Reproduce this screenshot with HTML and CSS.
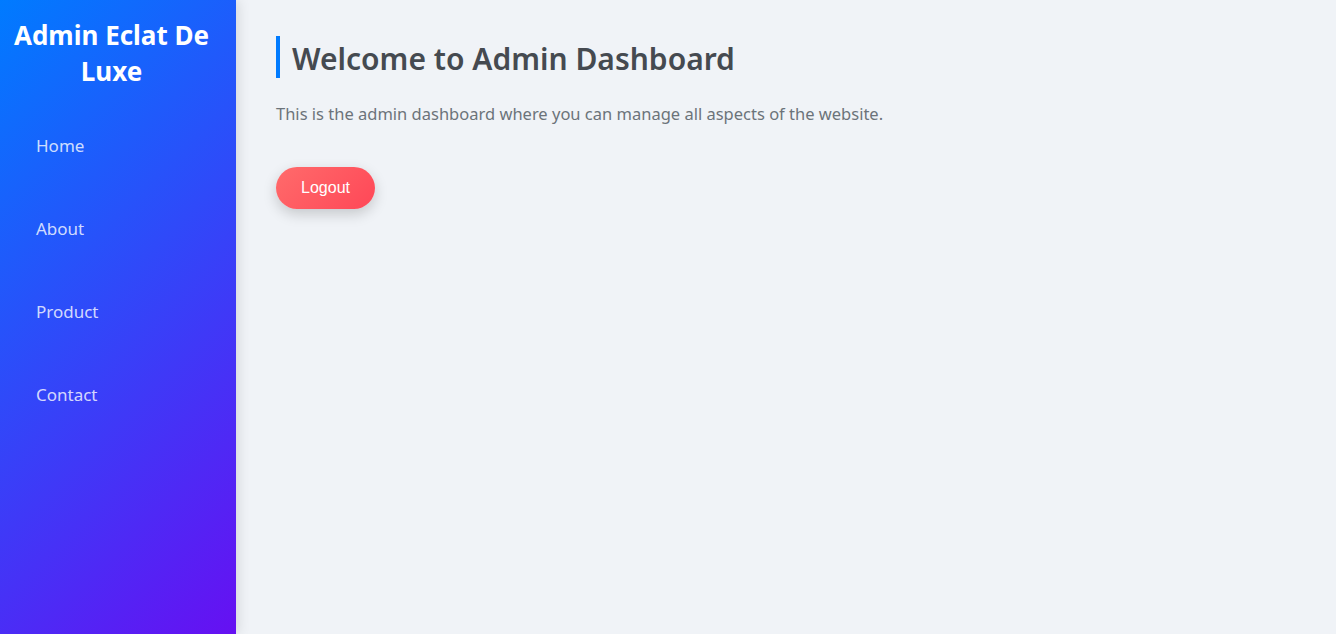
FILE: index.html
```html
<!DOCTYPE html>
<html lang="en">
<head>
<meta charset="utf-8">
<title>Admin Dashboard</title>
<link rel="stylesheet" href="styles.css">
</head>
<body>
<div class="layout">
  <aside class="sidebar">
    <h2 class="brand">Admin Eclat De Luxe</h2>
    <nav class="nav">
      <a class="nav-link" href="#">Home</a>
      <a class="nav-link" href="#">About</a>
      <a class="nav-link" href="#">Product</a>
      <a class="nav-link" href="#">Contact</a>
    </nav>
  </aside>
  <main class="content">
    <h1 class="title">Welcome to Admin Dashboard</h1>
    <p class="intro">This is the admin dashboard where you can manage all aspects of the website.</p>
    <button class="logout" type="button">Logout</button>
  </main>
</div>
</body>
</html>
```

FILE: styles.css
```css
* { box-sizing: border-box; }
html, body { margin: 0; height: 100%; }
body {
  font-family: "Noto Sans", "Open Sans", sans-serif;
  background: #f0f3f7;
}
.layout {
  display: flex;
  height: 634px;
}
.sidebar {
  width: 236px;
  flex-shrink: 0;
  background: linear-gradient(135deg, #007bff 0%, #6610f2 100%);
  box-shadow: 2px 0 12px rgba(0, 0, 0, 0.12);
  padding: 17px 0 0;
  position: relative;
  z-index: 1;
}
.brand {
  margin: 0;
  color: #ffffff;
  text-align: center;
  font-size: 26px;
  line-height: 36px;
  font-weight: 700;
  padding: 0 17px 0 4px;
}
.nav {
  display: flex;
  flex-direction: column;
  margin-top: 15px;
}
.nav-link {
  display: block;
  color: rgba(255, 255, 255, 0.8);
  text-decoration: none;
  font-size: 17px;
  line-height: 23px;
  padding: 30px 36px;
}
.content {
  flex: 1;
  padding: 36px 40px;
}
.title {
  margin: 0;
  border-left: 4px solid #007bff;
  padding: 2px 0 0 12px;
  height: 42px;
  font-size: 30px;
  line-height: 42px;
  font-weight: 600;
  color: #454a50;
}
.intro {
  margin: 24px 0 0;
  font-size: 16.5px;
  line-height: 24px;
  color: #6c737a;
}
.logout {
  margin-top: 41px;
  height: 42px;
  width: 99px;
  border: none;
  border-radius: 21px;
  background: linear-gradient(135deg, #ff6b6b 0%, #ff4757 100%);
  color: #ffffff;
  font-family: "Liberation Sans", Arial, sans-serif;
  font-size: 16px;
  box-shadow: 0 5px 14px rgba(0, 0, 0, 0.18);
  cursor: pointer;
}
```
